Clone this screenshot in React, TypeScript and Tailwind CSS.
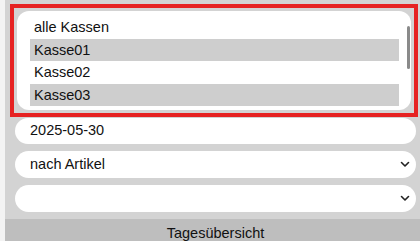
import React from "react";

const Chevron = () => (
  <svg width="10" height="7" viewBox="0 0 10 7" className="shrink-0">
    <path d="M1.5 1.5 L5 5 L8.5 1.5" fill="none" stroke="#222" strokeWidth="1.6" strokeLinecap="round" strokeLinejoin="round" />
  </svg>
);

export default function App() {
  const options = [
    { label: "alle Kassen", sel: false },
    { label: "Kasse01", sel: true },
    { label: "Kasse02", sel: false },
    { label: "Kasse03", sel: true },
  ];
  return (
    <div
      className="flex h-[241px] w-[420px] overflow-hidden bg-[#f3f3f3] text-[#111]"
      style={{ fontFamily: '"Liberation Sans", Arial, sans-serif' }}
    >
      <div className="ml-[5px] flex flex-1 flex-col bg-[#d3d3d3]">
        <div className="ml-[5px] mr-[2px] mt-[4px] border-4 border-[#e62222] p-[3px]">
          <div className="flex h-[99px] rounded-[12px] bg-white pl-[13px] pr-[1px] pt-[5px]">
            <div className="flex flex-1 flex-col">
              {options.map((o) => (
                <div
                  key={o.label}
                  className={`flex h-[22.5px] items-center pl-[4px] text-[14.5px] leading-none ${o.sel ? "bg-[#cecece]" : ""}`}
                >
                  {o.label}
                </div>
              ))}
            </div>
            <div className="ml-[8px] w-[3px] pt-[10px]">
              <div className="h-[43px] w-[3px] rounded-full bg-[#8a8a8a]" />
            </div>
          </div>
        </div>
        <div className="ml-[10px] mr-[4px] mt-[1px] flex flex-col gap-[7px]">
          <div className="flex h-[26px] items-center rounded-full bg-white pl-[15px] text-[14.5px]">2025-05-30</div>
          <div className="flex h-[27px] items-center justify-between rounded-full bg-white pl-[15px] pr-[6px] text-[14.5px]">
            <span>nach Artikel</span>
            <Chevron />
          </div>
          <div className="flex h-[27px] items-center justify-end rounded-full bg-white pr-[6px] text-[14.5px]">
            <Chevron />
          </div>
        </div>
        <div className="mt-[7px] flex h-[23px] shrink-0 justify-center bg-[#bebebe] pl-[6px] pt-[6px] text-[14.5px] leading-[17px]">
          Tagesübersicht
        </div>
      </div>
    </div>
  );
}
